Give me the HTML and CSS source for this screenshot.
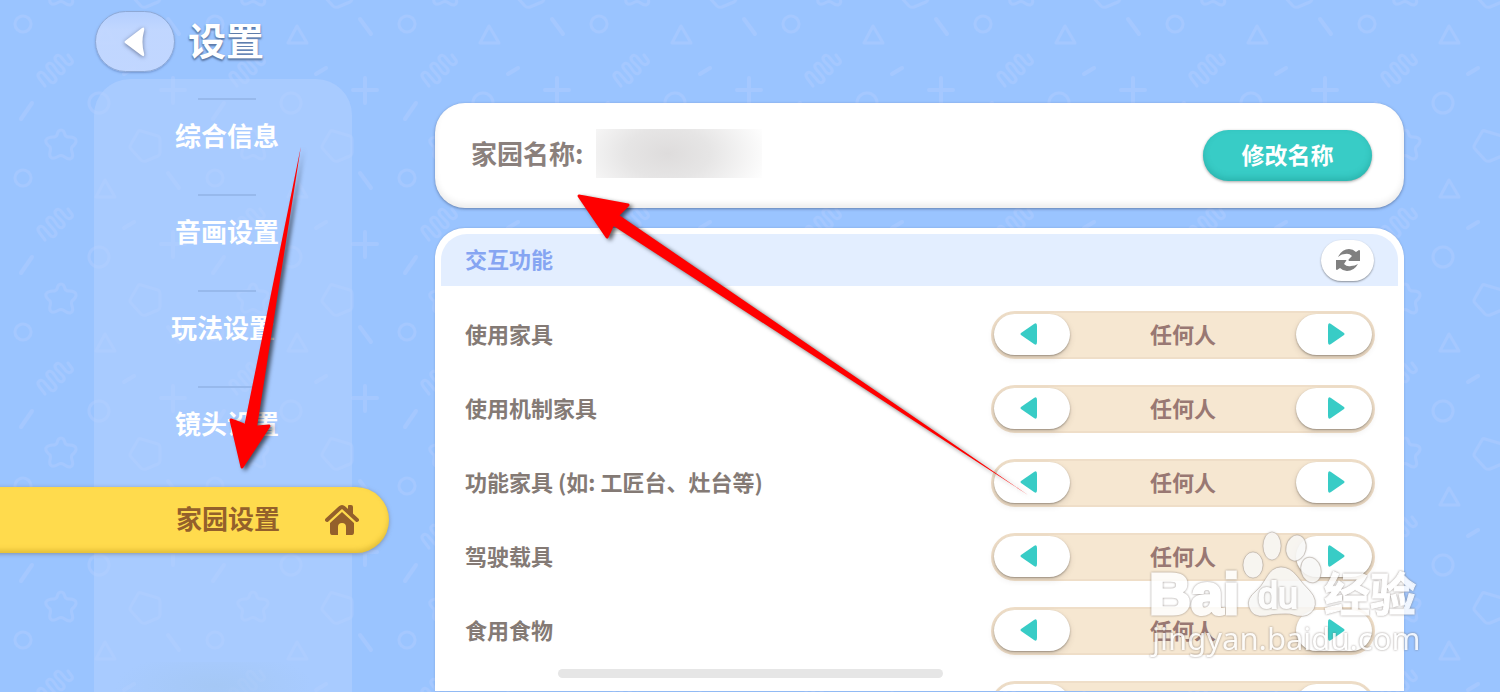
FILE: index.html
```html
<!DOCTYPE html>
<html lang="zh-CN">
<head>
<meta charset="utf-8">
<meta name="viewport" content="width=device-width, initial-scale=1">
<title>设置</title>
<link rel="stylesheet" href="styles.css">
</head>
<body>
<svg class="backdrop" aria-hidden="true">
  <defs>
    <g id="star"><path d="M61 130Q64 130 65 135Q66 137 69 137Q76 137 76 141Q76 144 72 147Q71 149 72 152Q74 158 70 159Q67 159 63 156Q61 155 59 156Q54 159 52 158Q49 157 50 152Q51 149 50 147Q45 143 46 140Q48 137 53 137Q56 137 57 135Q58 130 61 130Z"/></g>
    <g id="pentagon"><path d="M141 131L158 136Q160 137 160 140L160 152Q160 155 158 156L146 161Q143 162 141 160L131 149Q129 147 131 144L138 132Q139 130 141 131Z"/></g>
    <pattern id="shapes" width="192" height="154" patternUnits="userSpaceOnUse">
      <g fill="none" stroke="#a5c8ff" stroke-width="3" stroke-linecap="round" stroke-linejoin="round">
        <circle cx="23" cy="24" r="8"/>
        <path d="M105 26L96 43H115Z"/>
        <path d="M168 19L179 34M124 74L134 68M173 78V103M161 90H185M21 119L32 103" stroke-width="4"/>
        <circle cx="99" cy="103" r="10"/>
        <path d="M45 86L39 78C36 74 41 70 44 74L50 81C53 85 58 81 55 77L48 69C45 65 49 61 53 65L58 72C62 76 66 72 63 68L56 61C53 57 58 53 61 57L66 63C70 67 75 62 71 59L68 55"/>
        <use href="#star"/><use href="#star" y="-154"/>
        <use href="#pentagon"/><use href="#pentagon" y="-154"/>
      </g>
    </pattern>
  </defs>
  <rect width="100%" height="100%" fill="url(#shapes)"/>
</svg>

<div class="app">
  <aside class="side">
    <header class="topbar">
      <button class="back" type="button" aria-label="返回">
        <svg width="24" height="34" viewBox="0 0 24 34"><path d="M2 16L19 3Q22 1 21 6Q18 17 21 28Q22 33 18 30L2 18Q1 17 2 16Z" fill="#fff"/></svg>
      </button>
      <h1 class="title">设置</h1>
    </header>
    <nav class="menu">
      <ul class="menu-list">
        <li class="menu-item"><a href="#general">综合信息</a></li>
        <li class="menu-item"><a href="#av">音画设置</a></li>
        <li class="menu-item menu-item-wide"><a href="#play">玩法设置</a></li>
        <li class="menu-item"><a href="#camera">镜头设置</a></li>
        <li class="menu-active"><a href="#home" aria-current="page"><span>家园设置</span>
          <svg width="34" height="32" viewBox="0 0 34 32" aria-hidden="true"><path d="M2 16L15 4Q17 2 19 4L32 16" fill="none" stroke="#94602b" stroke-width="4" stroke-linecap="round"/><path d="M23 2Q23 1 24 1H26Q28 1 28 3V11L23 7ZM17 8L29 19V28Q29 31 27 31H21V23Q21 19 17 19T13 23V31H7Q5 31 5 28V19Z" fill="#94602b"/></svg>
        </a></li>
      </ul>
    </nav>
  </aside>

  <main class="content">
    <section class="card name-card">
      <h2 class="name-label">家园名称:</h2>
      <span class="name-mask"></span>
      <button class="rename" type="button">修改名称</button>
    </section>

    <section class="card panel">
      <header class="panel-head">
        <h2>交互功能</h2>
        <button class="refresh" type="button" aria-label="刷新">
          <svg width="26" height="24" viewBox="0 0 26 24"><g fill="#808080"><path d="M3 9Q7 1 14 1Q18 1 21 4L24 2Q25 2 25 3V13H14Q13 12 14 11L17 8Q14 5 10 6Q6 6 3 9Z"/><path d="M23 16Q19 23 12 23Q8 23 5 20L2 22Q1 22 1 21V12H11Q12 12 11 13L9 16Q12 19 16 18Q20 18 23 16Z"/></g></svg>
        </button>
      </header>
      <ul class="rows">
        <li class="row"><span class="row-label" id="r1">使用家具</span>
          <div class="picker" role="group" aria-labelledby="r1"><button class="prev" type="button" aria-label="上一个"><svg width="18" height="22" viewBox="0 0 18 22"><path d="M1 12Q0 11 1 10L14 1Q17-1 17 3V19Q17 23 14 21Z"/></svg></button><span class="value">任何人</span><button class="next" type="button" aria-label="下一个"><svg width="18" height="22" viewBox="0 0 18 22"><path d="M17 12Q18 11 17 10L4 1Q1-1 1 3V19Q1 23 4 21Z"/></svg></button></div></li>
        <li class="row"><span class="row-label" id="r2">使用机制家具</span>
          <div class="picker" role="group" aria-labelledby="r2"><button class="prev" type="button" aria-label="上一个"><svg width="18" height="22" viewBox="0 0 18 22"><path d="M1 12Q0 11 1 10L14 1Q17-1 17 3V19Q17 23 14 21Z"/></svg></button><span class="value">任何人</span><button class="next" type="button" aria-label="下一个"><svg width="18" height="22" viewBox="0 0 18 22"><path d="M17 12Q18 11 17 10L4 1Q1-1 1 3V19Q1 23 4 21Z"/></svg></button></div></li>
        <li class="row"><span class="row-label" id="r3">功能家具 (如: 工匠台、灶台等)</span>
          <div class="picker" role="group" aria-labelledby="r3"><button class="prev" type="button" aria-label="上一个"><svg width="18" height="22" viewBox="0 0 18 22"><path d="M1 12Q0 11 1 10L14 1Q17-1 17 3V19Q17 23 14 21Z"/></svg></button><span class="value">任何人</span><button class="next" type="button" aria-label="下一个"><svg width="18" height="22" viewBox="0 0 18 22"><path d="M17 12Q18 11 17 10L4 1Q1-1 1 3V19Q1 23 4 21Z"/></svg></button></div></li>
        <li class="row"><span class="row-label" id="r4">驾驶载具</span>
          <div class="picker" role="group" aria-labelledby="r4"><button class="prev" type="button" aria-label="上一个"><svg width="18" height="22" viewBox="0 0 18 22"><path d="M1 12Q0 11 1 10L14 1Q17-1 17 3V19Q17 23 14 21Z"/></svg></button><span class="value">任何人</span><button class="next" type="button" aria-label="下一个"><svg width="18" height="22" viewBox="0 0 18 22"><path d="M17 12Q18 11 17 10L4 1Q1-1 1 3V19Q1 23 4 21Z"/></svg></button></div></li>
        <li class="row"><span class="row-label" id="r5">食用食物</span>
          <div class="picker" role="group" aria-labelledby="r5"><button class="prev" type="button" aria-label="上一个"><svg width="18" height="22" viewBox="0 0 18 22"><path d="M1 12Q0 11 1 10L14 1Q17-1 17 3V19Q17 23 14 21Z"/></svg></button><span class="value">任何人</span><button class="next" type="button" aria-label="下一个"><svg width="18" height="22" viewBox="0 0 18 22"><path d="M17 12Q18 11 17 10L4 1Q1-1 1 3V19Q1 23 4 21Z"/></svg></button></div></li>
        <li class="row"><span class="row-label"></span>
          <div class="picker"><button class="prev" type="button" aria-label="上一个"></button><span class="value"></span><button class="next" type="button" aria-label="下一个"></button></div></li>
      </ul>
    </section>
  </main>
</div>

<div class="smudge"></div>
<div class="home-indicator"></div>

<svg class="watermark" width="280" height="136" viewBox="0 0 280 136" role="img" aria-label="Baidu 经验">
  <g class="wm-marks" fill="#fff" fill-opacity=".8" stroke="#a0958a" stroke-opacity=".45" stroke-width="1">
    <ellipse cx="113" cy="35" rx="10" ry="13"/>
    <ellipse cx="132" cy="16" rx="9" ry="14"/>
    <ellipse cx="156" cy="18" rx="10" ry="13" transform="rotate(12 156 18)"/>
    <ellipse cx="171" cy="40" rx="10" ry="13" transform="rotate(-15 171 40)"/>
    <path d="M141 37Q150 37 157 46Q163 54 170 61Q178 70 174 79Q169 88 157 86Q150 83 141 84Q132 84 126 86Q112 88 109 77Q106 69 116 61Q121 57 126 48Q132 37 141 37Z"/>
  </g>
  <g class="wm-text">
    <text class="wm-latin" x="9" y="84">Bai</text>
    <text class="wm-du" x="118" y="78">du</text>
    <text class="wm-cjk" x="184" y="81">经验</text>
    <text class="wm-url" x="12" y="120">jingyan.baidu.com</text>
  </g>
</svg>

<svg class="arrows" width="1100" height="520" viewBox="0 0 1100 520" aria-hidden="true">
  <g fill="red" stroke="red" stroke-linejoin="round">
    <path stroke-width="0" d="M301 146L257 427H244Z"/>
    <path stroke-width="0" d="M1028 495L612 225L619 215Z"/>
    <path stroke-width="3" d="M231 420L244 425L257 427L269 426L242 467Z"/>
    <path stroke-width="3" d="M579 196L628 205L618 215L613 224L607 237Z"/>
  </g>
</svg>
</body>
</html>
```
FILE: styles.css
```css
* { box-sizing: border-box; }

body {
  margin: 0;
  height: 100vh;
  position: relative;
  overflow: hidden;
  background: #9ac4ff;
  font-family: "Noto Sans CJK SC", sans-serif;
  font-weight: 700;
}

h1, h2, ul { margin: 0; padding: 0; list-style: none; }
a { color: inherit; text-decoration: none; }

button {
  border: 0;
  padding: 0;
  font: inherit;
  color: inherit;
  display: flex;
  align-items: center;
  justify-content: center;
}

.backdrop {
  position: absolute;
  inset: 0;
  width: 100%;
  height: 100%;
}

.app {
  position: relative;
  display: flex;
  height: 100%;
}

/* Sidebar */
.side {
  flex: 0 0 435px;
  display: flex;
  flex-direction: column;
  padding-left: 94px;
}

.topbar {
  display: flex;
  align-items: center;
  gap: 13px;
  padding: 11px 0 7px 1px;
}

.back {
  width: 80px;
  height: 61px;
  border-radius: 31px;
  border: 1px solid #8ea9d6;
  background: linear-gradient(rgba(182, 208, 255, .95), rgba(196, 216, 255, .92) 30%);
  box-shadow: 0 1px 2px rgba(80, 110, 170, .5);
}
.back svg { filter: drop-shadow(0 1px 2px rgba(70, 80, 110, .7)); }

.title {
  padding-bottom: 6px;
  font-size: 38px;
  line-height: 54px;
  color: #fff;
  text-shadow: 0 1px 2px #5d7ba8, 0 2px 2px rgba(70, 95, 140, .7);
}

.menu {
  flex: 1;
  width: 258px;
  padding-top: 19px;
  border-radius: 36px 36px 0 0;
  background: rgba(182, 210, 255, .5);
}

.menu-item {
  height: 96px;
  font-size: 26px;
  line-height: 36px;
  color: #fff;
}
.menu-item a {
  display: block;
  padding-left: 8px;
  text-align: center;
}
.menu-item::before {
  content: "";
  display: block;
  width: 58px;
  height: 2px;
  margin: 0 96px 17px 104px;
  background: #97b9ec;
}
.menu-item-wide a { padding-left: 0; }

.menu-active {
  margin: 5px -37px 0 -104px;
  font-size: 26px;
  line-height: 36px;
  color: #94602b;
}
.menu-active span { padding-bottom: 4px; }
.menu-active a {
  display: flex;
  align-items: center;
  justify-content: flex-end;
  gap: 45px;
  height: 66px;
  padding-right: 30px;
  border-radius: 0 33px 33px 0;
  background: #ffdb4d;
  box-shadow: 0 1px 4px rgba(110, 110, 120, .6), inset 0 -3px 5px rgba(190, 155, 30, .45);
}

/* Content */
.content {
  flex: 1;
  min-width: 0;
  display: flex;
  flex-direction: column;
  gap: 20px;
  padding: 103px 96px 1px 0;
}

.card { background: #fff; border-radius: 30px; }

.name-card {
  display: flex;
  align-items: center;
  padding: 26px 32px 27px 36px;
  box-shadow: 0 1px 3px rgba(60, 80, 120, .6), inset 0 -4px 6px rgba(0, 0, 0, .08);
}
.name-label {
  padding-bottom: 4px;
  font-size: 26px;
  line-height: 48px;
  color: #8a807c;
}
.name-mask {
  width: 166px;
  height: 49px;
  margin: 0 0 3px 13px;
  background: radial-gradient(ellipse 105px 65px at 43% 50%, #dedcdc, #e6e5e5 40%, #fff);
}
.rename {
  width: 169px;
  height: 51px;
  margin-left: auto;
  padding-bottom: 3px;
  border-radius: 26px;
  font-size: 23px;
  color: #fff;
  background: #38ccc6;
  box-shadow: 0 1px 3px rgba(0, 0, 0, .35), inset 0 -3px 6px rgba(0, 110, 105, .25);
}

.panel {
  flex: 1;
  min-height: 0;
  overflow: hidden;
  padding: 6px 6px 0;
  border-radius: 30px 30px 0 0;
  box-shadow: 0 0 2px rgba(60, 80, 120, .3);
}
.panel-head {
  display: flex;
  align-items: center;
  justify-content: space-between;
  height: 52px;
  padding: 0 24px;
  border-radius: 26px 26px 0 0;
  background: #e3eeff;
  color: #86a5f2;
}
.panel-head h2 {
  padding-bottom: 4px;
  font-size: 22px;
  line-height: 32px;
}
.refresh {
  width: 53px;
  height: 41px;
  border-radius: 21px;
  background: #fff;
  box-shadow: 0 1px 2px rgba(0, 0, 0, .4);
}

.rows { padding: 12px 23px 0 24px; }
.row {
  display: flex;
  align-items: center;
  justify-content: space-between;
  height: 74px;
  font-size: 22px;
  line-height: 32px;
  color: #847a75;
}
.row-label, .value { padding-bottom: 4px; }

.picker {
  display: flex;
  align-items: center;
  justify-content: space-between;
  width: 384px;
  height: 48px;
  padding: 0 1px;
  border: 2px solid #efdec8;
  border-radius: 24px;
  background: #f6e7d1;
  color: #997873;
}
.picker button {
  width: 76px;
  height: 41px;
  margin-bottom: 2px;
  border-radius: 21px;
  background: #fff;
  fill: #38ccc6;
  box-shadow: 0 1px 2px rgba(80, 70, 60, .5), 0 3px 6px rgba(80, 70, 60, .15);
}
.picker .prev { padding-right: 6px; }
.picker .next { padding-left: 4px; }

/* Overlays */
.smudge {
  position: absolute;
  left: 60px;
  bottom: 0;
  width: 250px;
  height: 30px;
  background: radial-gradient(ellipse 100px 34px at 62% 80%, rgba(164, 199, 243, .8), rgba(162, 200, 250, 0));
}
.home-indicator {
  position: absolute;
  left: 50%;
  bottom: 14px;
  width: 385px;
  height: 9px;
  margin-left: -192px;
  border-radius: 5px;
  background: #e6e6e6;
}
.watermark {
  position: absolute;
  right: 80px;
  bottom: 26px;
  pointer-events: none;
}
.wm-marks { filter: drop-shadow(0 0 1px rgba(120, 110, 100, .3)); }
.wm-text {
  fill: #fff;
  opacity: .85;
  stroke: #fff;
  stroke-width: 1px;
  filter: drop-shadow(0 0 1px rgba(110, 100, 95, .8));
}
.wm-latin { font: 700 58px "Liberation Sans", sans-serif; stroke-width: 3px; }
.wm-du { font: 400 36px "Liberation Sans", sans-serif; stroke-width: 2px; }
.wm-cjk { font: 700 46px "Noto Sans CJK SC", sans-serif; }
.wm-url { font: 400 31px "Noto Sans", sans-serif; stroke-width: 0; }
.arrows {
  position: absolute;
  left: 0;
  top: 0;
  pointer-events: none;
  filter: drop-shadow(3px 2px 2px rgba(0, 0, 0, .6));
}
```
